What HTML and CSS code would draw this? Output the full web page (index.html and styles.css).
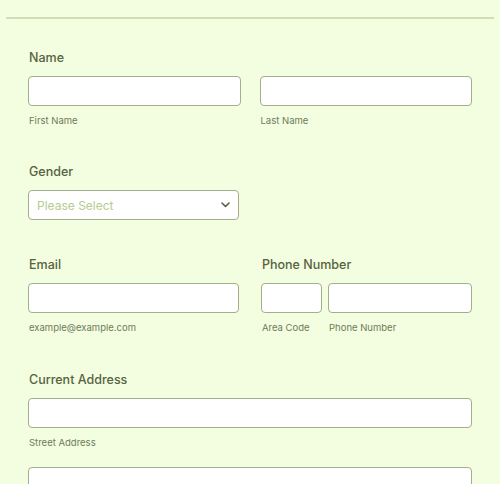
FILE: index.html
```html
<!DOCTYPE html>
<html lang="en">
  <head>
    <title>Contact Form</title>
    <meta charset="UTF-8" />
    <meta name="viewport" content="width=device-width, initial-scale=1.0" />
    <link rel="stylesheet" href="styles.css">
  </head>
  <body>
    <div class="form-top"></div>

    <form class="form-list">
      <div class="field field-name">
        <label class="field-label">Name</label>
        <div class="row row-name">
          <div class="sub">
            <input type="text" class="input" />
            <span class="sublabel">First Name</span>
          </div>
          <div class="sub">
            <input type="text" class="input" />
            <span class="sublabel">Last Name</span>
          </div>
        </div>
      </div>

      <div class="field field-gender">
        <label class="field-label">Gender</label>
        <div class="select-box">
          <span class="placeholder">Please Select</span>
          <svg class="chevron" width="9" height="6" viewBox="0 0 9 6">
            <path d="M1 1l3.5 3.5 3.5-3.5" fill="none" stroke="#56633f" stroke-width="1.6" stroke-linecap="round" stroke-linejoin="round"/>
          </svg>
        </div>
      </div>

      <div class="row row-contact">
        <div class="field">
          <label class="field-label">Email</label>
          <input type="email" class="input" />
          <span class="sublabel">example@example.com</span>
        </div>
        <div class="field">
          <label class="field-label">Phone Number</label>
          <div class="row row-phone">
            <div class="sub">
              <input type="text" class="input" />
              <span class="sublabel">Area Code</span>
            </div>
            <div class="sub">
              <input type="text" class="input" />
              <span class="sublabel">Phone Number</span>
            </div>
          </div>
        </div>
      </div>

      <div class="field">
        <label class="field-label">Current Address</label>
        <input type="text" class="input" />
        <span class="sublabel">Street Address</span>
        <input type="text" class="input input-next" />
      </div>
    </form>
  </body>
</html>
```

FILE: styles.css
```css
body {
  font-family: "Inter", "Liberation Sans", sans-serif;
  margin: 0;
  padding: 0;
  background-color: #f3fddf;
  color: #56633f;
}
.form-top {
  margin: 0 6px;
  height: 17px;
  border-bottom: 2px solid #d2ddb6;
}
.form-list {
  padding: 30px 28px 0 28px;
}
.field {
  display: flex;
  flex-direction: column;
  padding-bottom: 38px;
}
.field-name {
  padding-bottom: 37px;
}
.field-gender {
  padding-bottom: 36px;
}
.field-label {
  font-size: 12.5px;
  line-height: 17px;
  font-weight: 500;
  color: #56633f;
  margin-bottom: 10px;
  padding-left: 1px;
}
.row {
  display: grid;
}
.row-name {
  grid-template-columns: 1fr 1fr;
  column-gap: 19px;
}
.row-contact {
  grid-template-columns: 211px 211px;
  column-gap: 22px;
}
.row-phone {
  grid-template-columns: 61px 1fr;
  column-gap: 6px;
}
.sub {
  display: flex;
  flex-direction: column;
}
.input {
  box-sizing: border-box;
  width: 100%;
  height: 30px;
  margin: 0;
  padding: 0 8px;
  border: 1px solid #a5ae8a;
  border-radius: 4px;
  background: #ffffff;
  font-family: inherit;
}
.sublabel {
  margin-top: 10px;
  padding-left: 1px;
  font-size: 9.5px;
  line-height: 10px;
  color: #6e7b5a;
}
.select-box {
  box-sizing: border-box;
  width: 211px;
  height: 30px;
  border: 1px solid #a5ae8a;
  border-radius: 4px;
  background: #ffffff;
  display: flex;
  align-items: center;
  justify-content: space-between;
  padding: 0 8px 0 8px;
}
.placeholder {
  font-size: 12px;
  color: #b5cc8e;
}
.input-next {
  margin-top: 19px;
}
```
